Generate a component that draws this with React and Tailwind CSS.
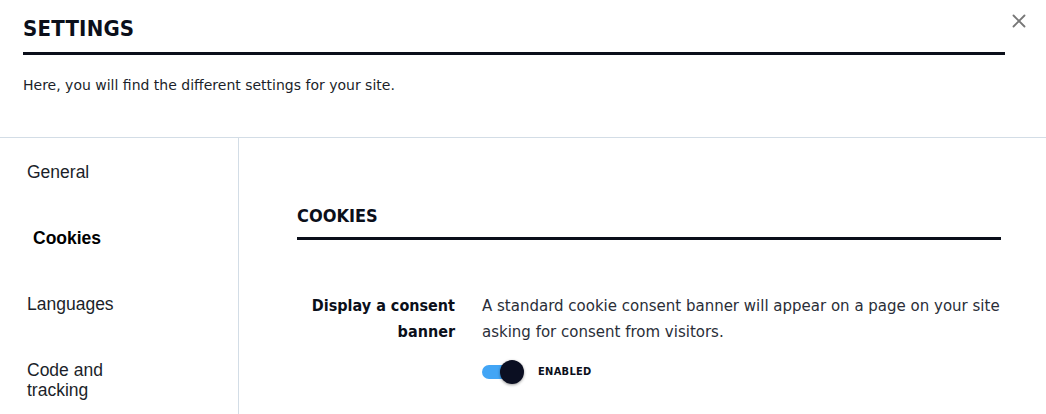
import { X } from 'lucide-react'

const din = { fontFamily: '"DejaVu Sans Condensed", Roboto, sans-serif' }
const body = { fontFamily: '"DejaVu Sans", Roboto, sans-serif' }

const menu = [
  { label: 'General' },
  { label: 'Cookies', active: true },
  { label: 'Languages' },
  { label: 'Code and tracking' },
]

export default function App() {
  return (
    <div className="w-[1046px] h-[414px] overflow-hidden bg-white text-[#0b0f1a]" style={din}>
      {/* Header */}
      <div className="relative px-[23px] pt-[15px]">
        <h1 className="text-[22px] font-bold leading-[28px] tracking-[0.2px]">SETTINGS</h1>
        <div className="mt-[9px] mr-[18px] h-[3px] bg-[#0b0f1a]" />
        <p className="mt-[20px] text-[14px] leading-[20px] text-[#1b1f2a]" style={body}>
          Here, you will find the different settings for your site.
        </p>
        <button className="absolute right-[16px] top-[10px] text-[#777]">
          <X size={22} strokeWidth={2} />
        </button>
      </div>

      {/* Body */}
      <div className="mt-[42px] flex border-t border-[#d3dde6]">
        <nav
          className="w-[239px] shrink-0 border-r border-[#d3dde6] pl-[27px] pt-[24px] text-[17.5px] leading-[20px]"
          style={{ fontFamily: '"Liberation Sans", Arial, sans-serif' }}
        >
          {menu.map((m) => (
            <div
              key={m.label}
              className={
                m.active
                  ? 'h-[66px] pl-[6px] font-bold text-black'
                  : 'h-[66px] w-[110px] text-[#1b1f2a]'
              }
            >
              {m.label}
            </div>
          ))}
        </nav>

        <section className="flex-1 pl-[58px] pr-[45px] pt-[67px]">
          <h2 className="text-[18px] font-bold leading-[22px]">COOKIES</h2>
          <div className="mt-[10px] h-[3px] bg-[#0b0f1a]" />

          <div className="mt-[53px] flex">
            <div className="w-[158px] shrink-0 text-right text-[16px] font-bold leading-[26px]">
              Display a consent
              <br />
              banner
            </div>
            <div className="ml-[27px]">
              <p className="text-[15px] leading-[26px] text-[#2a2e38]" style={body}>
                A standard cookie consent banner will appear on a page on your site asking for consent from visitors.
              </p>
              <div className="mt-[19px] flex items-center">
                <div className="relative h-[14px] w-[38px] rounded-full bg-[#42a5f5]">
                  <div className="absolute -top-[5px] left-[18px] h-[24px] w-[24px] rounded-full bg-[#0b0f22] shadow-[0_1px_3px_rgba(0,0,0,0.4)]" />
                </div>
                <span className="ml-[18px] text-[11px] font-bold tracking-[0.3px]">ENABLED</span>
              </div>
            </div>
          </div>
        </section>
      </div>
    </div>
  )
}
